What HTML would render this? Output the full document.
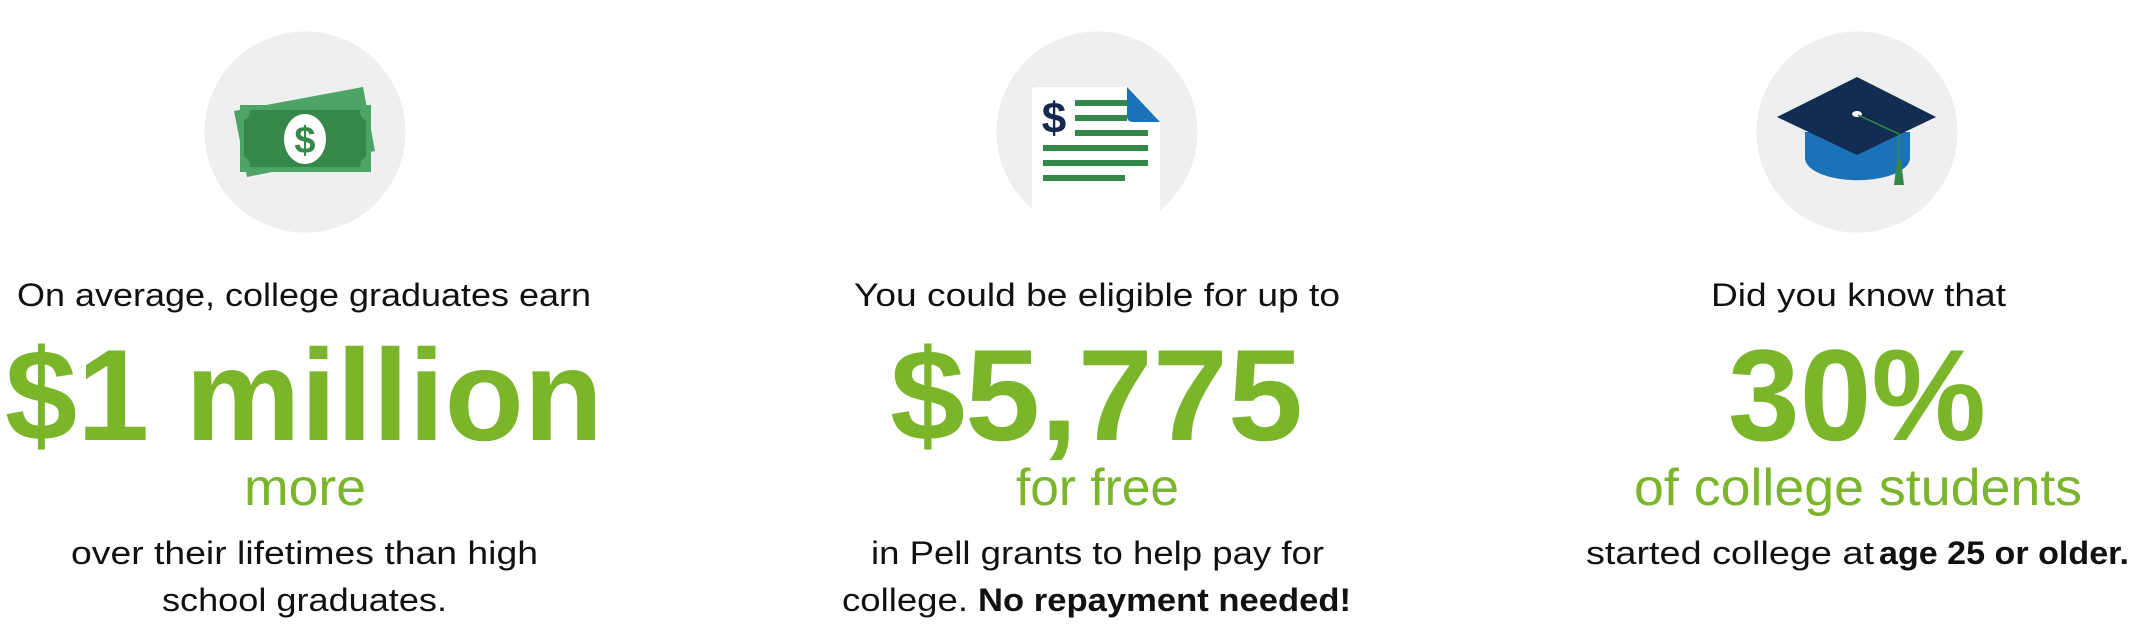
<!DOCTYPE html>
<html><head><meta charset="utf-8"><style>
html,body{margin:0;padding:0;background:#fff;}
svg{display:block;}
text{font-family:"Liberation Sans",sans-serif;}
</style></head><body>
<svg width="2136" height="627" viewBox="0 0 2136 627" xmlns="http://www.w3.org/2000/svg">
<defs>
<clipPath id="c2"><circle cx="1097" cy="132" r="100.5"/></clipPath>
</defs>
<!-- circles -->
<circle cx="305" cy="132" r="100.5" fill="#efefef"/>
<circle cx="1097" cy="132" r="100.5" fill="#efefef"/>
<circle cx="1857" cy="132" r="100.5" fill="#efefef"/>

<!-- money icon -->
<polygon points="234,111 363,87 375,151 247,177" fill="#4ca466"/>
<rect x="240" y="105" width="131" height="67" fill="#4ca466"/>
<path d="M250,110 H360 Q360,118 366,120 V157 Q360,159 360,167 H250 Q250,159 244,157 V120 Q250,118 250,110 Z" fill="#35884a"/>
<ellipse cx="305" cy="139" rx="21" ry="25" fill="#fff"/>
<text x="305" y="153" font-size="38" font-weight="bold" fill="#35884a" text-anchor="middle">$</text>

<!-- document icon -->
<g clip-path="url(#c2)">
<path d="M1036,87 H1127 L1160,122 V240 H1032 V91 Q1032,87 1036,87 Z" fill="#fff"/>
</g>
<path d="M1127,87 L1160,122 H1133 Q1127,122 1127,116 Z" fill="#1a72b9"/>
<rect x="1075" y="100" width="52" height="6" fill="#35884a"/>
<rect x="1075" y="115" width="52" height="6" fill="#35884a"/>
<rect x="1075" y="130" width="73" height="6" fill="#35884a"/>
<rect x="1043" y="145" width="105" height="6" fill="#35884a"/>
<rect x="1043" y="160" width="105" height="6" fill="#35884a"/>
<rect x="1043" y="175" width="82" height="6" fill="#35884a"/>
<text x="1054" y="133" font-size="44" font-weight="bold" fill="#13294f" text-anchor="middle">$</text>

<!-- grad cap -->
<path d="M1805,132 V158 A52,22 0 0 0 1910,158 V132 Z" fill="#1a72b9"/>
<polygon points="1857,77 1936,117 1857,155 1777,117" fill="#132c51"/>
<ellipse cx="1857" cy="114" rx="5" ry="3" fill="#fff"/>
<polyline points="1858,115 1899,134 1899,168" fill="none" stroke="#35884a" stroke-width="1.5"/>
<path d="M1897,160 L1901,160 L1904,185 L1894,185 Z" fill="#35884a"/>

<!-- column 1 text -->
<text x="17" y="306" font-size="32" fill="#111" textLength="574" lengthAdjust="spacingAndGlyphs">On average, college graduates earn</text>
<text x="5" y="440" font-size="130" font-weight="bold" fill="#7ab52a" textLength="598" lengthAdjust="spacingAndGlyphs">$1 million</text>
<text x="244" y="505" font-size="52" fill="#7ab52a" textLength="122" lengthAdjust="spacingAndGlyphs">more</text>
<text x="71" y="564" font-size="32" fill="#111" textLength="467" lengthAdjust="spacingAndGlyphs">over their lifetimes than high</text>
<text x="162" y="611" font-size="32" fill="#111" textLength="285" lengthAdjust="spacingAndGlyphs">school graduates.</text>

<!-- column 2 text -->
<text x="854" y="306" font-size="32" fill="#111" textLength="486" lengthAdjust="spacingAndGlyphs">You could be eligible for up to</text>
<text x="890" y="440" font-size="130" font-weight="bold" fill="#7ab52a" textLength="413" lengthAdjust="spacingAndGlyphs">$5,775</text>
<text x="1016" y="505" font-size="52" fill="#7ab52a" textLength="163" lengthAdjust="spacingAndGlyphs">for free</text>
<text x="871" y="564" font-size="32" fill="#111" textLength="453" lengthAdjust="spacingAndGlyphs">in Pell grants to help pay for</text>
<text x="842" y="611" font-size="32" fill="#111" textLength="126" lengthAdjust="spacingAndGlyphs">college.</text>
<text x="978" y="611" font-size="32" font-weight="bold" fill="#111" textLength="373" lengthAdjust="spacingAndGlyphs">No repayment needed!</text>

<!-- column 3 text -->
<text x="1711" y="306" font-size="32" fill="#111" textLength="295" lengthAdjust="spacingAndGlyphs">Did you know that</text>
<text x="1728" y="440" font-size="130" font-weight="bold" fill="#7ab52a" textLength="258" lengthAdjust="spacingAndGlyphs">30%</text>
<text x="1634" y="505" font-size="52" fill="#7ab52a" textLength="448" lengthAdjust="spacingAndGlyphs">of college students</text>
<text x="1586" y="564" font-size="32" fill="#111" textLength="288" lengthAdjust="spacingAndGlyphs">started college at</text>
<text x="1879" y="564" font-size="32" font-weight="bold" fill="#111" textLength="250" lengthAdjust="spacingAndGlyphs">age 25 or older.</text>
</svg>
</body></html>
